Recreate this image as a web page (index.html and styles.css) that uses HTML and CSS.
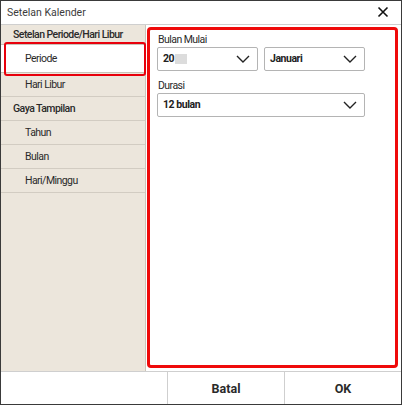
FILE: index.html
```html
<!DOCTYPE html>
<html>
<head>
<meta charset="utf-8">
<link rel="stylesheet" href="styles.css">
</head>
<body>
<div class="dialog">
  <div class="titlebar">
    <span class="title">Setelan Kalender</span>
    <svg class="close" width="12" height="12" viewBox="0 0 12 12"><path d="M1.5 1.5 L10.5 10.5 M10.5 1.5 L1.5 10.5" stroke="#111" stroke-width="1.6" fill="none"/></svg>
  </div>
  <div class="main">
    <div class="sidebar">
      <div class="row head">Setelan Periode/Hari Libur</div>
      <div class="row sub selected">Periode</div>
      <div class="row sub">Hari Libur</div>
      <div class="row head">Gaya Tampilan</div>
      <div class="row sub">Tahun</div>
      <div class="row sub">Bulan</div>
      <div class="row sub">Hari/Minggu</div>
    </div>
    <div class="content">
      <div class="panel">
        <div class="field">
          <div class="label">Bulan Mulai</div>
          <div class="pair">
            <div class="select"><span class="val">20<span class="blur"></span></span><svg class="chev" width="14" height="8" viewBox="0 0 14 8"><path d="M1 1 L7 7 L13 1" stroke="#222" stroke-width="1.4" fill="none"/></svg></div>
            <div class="select"><span class="val">Januari</span><svg class="chev" width="14" height="8" viewBox="0 0 14 8"><path d="M1 1 L7 7 L13 1" stroke="#222" stroke-width="1.4" fill="none"/></svg></div>
          </div>
        </div>
        <div class="field second">
          <div class="label">Durasi</div>
          <div class="select wide"><span class="val">12 bulan</span><svg class="chev" width="14" height="8" viewBox="0 0 14 8"><path d="M1 1 L7 7 L13 1" stroke="#222" stroke-width="1.4" fill="none"/></svg></div>
        </div>
      </div>
    </div>
  </div>
  <div class="footer">
    <div class="spacer"></div>
    <div class="btn">Batal</div>
    <div class="btn">OK</div>
  </div>
</div>
</body>
</html>
```
FILE: styles.css
```css
* { box-sizing: border-box; }
html, body { margin: 0; padding: 0; background: #fff; }
body { font-family: Roboto, "Liberation Sans", Arial, sans-serif; color: #222; }
.dialog {
  width: 402px; height: 405px;
  border: 1px solid #3a3a3a;
  display: flex; flex-direction: column;
  background: #fff;
}
.titlebar {
  height: 24px;
  border-bottom: 1px solid #cfcfcf;
  display: flex; align-items: center; justify-content: space-between;
  padding: 0 12px 0 6px;
}
.title { font-size: 10.5px; color: #3c3c3c; }
.close { display: block; }
.main { height: 347px; display: flex; }
.sidebar {
  width: 145px;
  background: #ece6dc;
  border-right: 1px solid #cbc5bb;
  display: flex; flex-direction: column;
}
.row {
  font-size: 10.5px;
  letter-spacing: -0.55px;
  display: flex; align-items: center;
  height: 24px;
  border-bottom: 1px solid #d2ccc2;
  color: #2a2a2a;
}
.row.head { padding-left: 12px; font-weight: 500; }
.row.sub { padding-left: 24px; }
.row:first-child { height: 20px; padding-top: 1px; }
.row.selected {
  position: relative;
  background: #fff;
  height: 29px;
  border-top: 1px solid #c9c3b9;
  border-bottom: 1px solid #c9c3b9;
  margin-top: -1px;
}
.row.selected::after {
  content: "";
  position: absolute;
  left: 3px; right: -1px; top: -3px; bottom: -4px;
  border: 2px solid #e8000b;
  border-radius: 3px;
}
.content { flex: 1; padding: 2px 3px 3px 1px; }
.panel {
  height: 100%;
  border: 3px solid #ef0a0a;
  border-radius: 4px;
  padding: 4px 0 0 7px;
}
.label { font-size: 10.5px; letter-spacing: -0.55px; line-height: 12px; color: #2a2a2a; margin-bottom: 1px; padding-left: 1px; }
.pair { display: flex; gap: 6px; }
.select {
  width: 101px; height: 24px;
  border: 1px solid #b4b4b4;
  border-radius: 2px;
  display: flex; align-items: center; justify-content: space-between;
  padding: 0 7px 0 5px;
  background: #fff;
}
.select.wide { width: 208px; }
.val { font-size: 10.5px; letter-spacing: -0.45px; font-weight: 700; color: #222; display: flex; align-items: center; }
.blur { display: inline-block; width: 12px; height: 10px; background: #dcdcdc; margin-left: 1px; }
.chev { display: block; }
.field.second { margin-top: 9px; }
.footer {
  height: 33px;
  border-top: 1px solid #cfcfcf;
  display: flex;
}
.spacer { width: 166px; }
.btn {
  flex: 1;
  border-left: 1px solid #cfcfcf;
  display: flex; align-items: center; justify-content: center;
  font-size: 12.5px; font-weight: 700; color: #2a2a2a;
}
```
